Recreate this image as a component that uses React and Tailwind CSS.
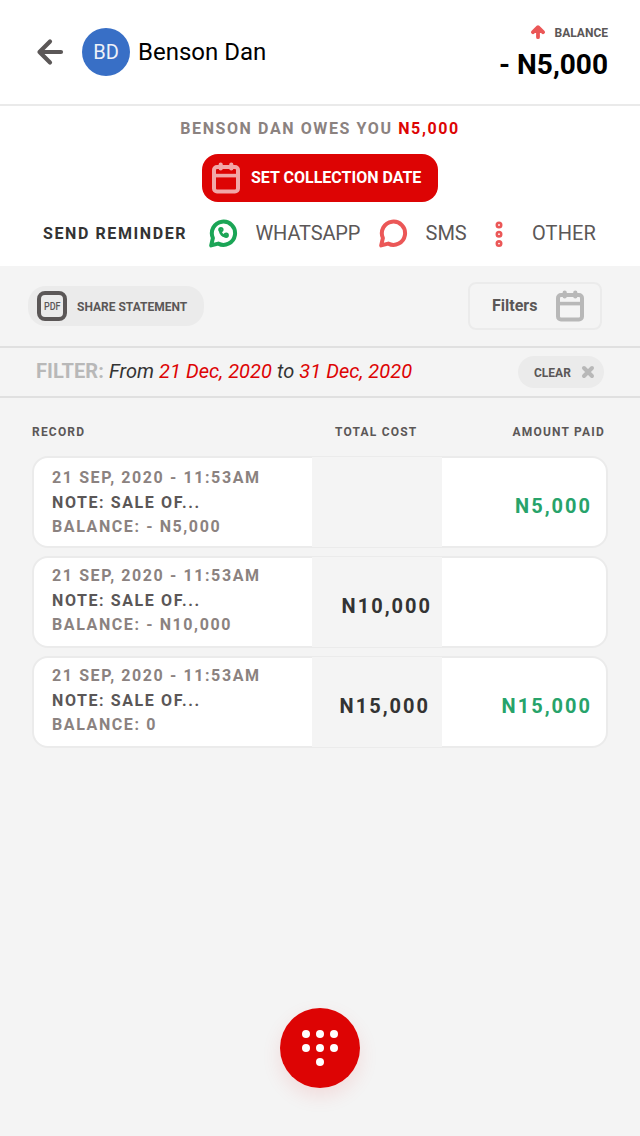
function CalendarIcon({ className }) {
  return (
    <svg className={className} width="28" height="32" viewBox="0 0 28 32" fill="none" stroke="currentColor">
      <rect x="2" y="5" width="24" height="24.5" rx="3" strokeWidth="4" />
      <path d="M4 13.6h20" strokeWidth="3.6" />
      <path d="M8.7 2.5v4M19.3 2.5v4" strokeWidth="4.2" strokeLinecap="round" />
    </svg>
  );
}

function BubbleIcon({ className, children }) {
  return (
    <svg className={className} width="30" height="30" viewBox="0 0 30 30" fill="none" stroke="currentColor">
      <path
        d="M4.9 19A11.6 11.6 0 1 1 10.3 24.6L3.2 26.4L4.9 19Z"
        strokeWidth="4"
        strokeLinejoin="round"
      />
      {children}
    </svg>
  );
}

const records = [
  { balance: "- N5,000", cost: "", paid: "N5,000", text: "pt-2", costPad: "" },
  { balance: "- N10,000", cost: "N10,000", paid: "", text: "pt-1.5", costPad: "pr-2.5" },
  { balance: "0", cost: "N15,000", paid: "N15,000", text: "pt-1.5", costPad: "pr-3" },
];

function RecordCard({ record }) {
  return (
    <div className="flex h-[92px] rounded-2xl border-2 border-[#ebebeb] bg-white font-bold">
      <div className={`w-[278px] pl-[18px] text-base leading-[24.6px] tracking-[1.6px] text-[#8b8280] ${record.text}`}>
        <p>21 SEP, 2020 - 11:53AM</p>
        <p className="text-[#5b5757]">NOTE: SALE OF...</p>
        <p>BALANCE: {record.balance}</p>
      </div>
      <div className={`-my-px flex w-[130px] items-center justify-end bg-[#f4f4f4] pt-2 text-xl tracking-[2px] text-[#333] ${record.costPad}`}>
        {record.cost}
      </div>
      <div className="flex flex-1 items-center justify-end pt-2 pr-3.5 text-xl tracking-[2px] text-[#27a36a]">
        {record.paid}
      </div>
    </div>
  );
}

export default function App() {
  return (
    <div className="flex h-[1136px] w-[640px] flex-col bg-[#f4f4f4] font-['Roboto',sans-serif]">
      <header className="flex h-[106px] items-start border-b-2 border-[#eaeaea] bg-white pr-8 pl-9">
        <svg className="mt-[37px] text-[#5b5757]" width="30" height="30" viewBox="0 0 30 30" fill="none" stroke="currentColor" strokeWidth="4.2" strokeLinecap="round" strokeLinejoin="round">
          <path d="M25 15H3.5M14 4.5L3.5 15L14 25.5" />
        </svg>
        <div className="mt-7 ml-4 flex size-12 items-center justify-center rounded-full bg-[#386fc6] text-xl text-[#eef1f8]">BD</div>
        <h1 className="mt-9 ml-2 text-2xl leading-8 text-black">Benson Dan</h1>
        <div className="ml-auto flex flex-col items-end pt-[25px]">
          <div className="flex h-4 items-center">
            <svg className="mr-[8.5px] text-[#eb5757]" width="16" height="16" viewBox="0 0 16 16" fill="none" stroke="currentColor" strokeWidth="3.8" strokeLinecap="round" strokeLinejoin="round">
              <path d="M8 12.2V2.5M3 7.2L8 2.2L13 7.2" />
              <path d="M8 3L12.5 7.5H3.5Z" strokeWidth="1" fill="currentColor" />
            </svg>
            <span className="text-xs font-bold text-[#5b5757]">BALANCE</span>
          </div>
          <p className="mt-2 text-[28px] leading-8 font-bold text-black">- N5,000</p>
        </div>
      </header>

      <section className="flex h-40 flex-col items-center bg-white">
        <p className="mt-[11px] text-base leading-6 font-bold tracking-[1.6px] text-[#8b8280]">
          BENSON DAN OWES YOU <span className="text-[#dd0404]">N5,000</span>
        </p>
        <button className="mt-[13px] flex h-12 w-[236px] items-center rounded-2xl bg-[#dd0404] pl-2.5 text-base font-bold text-white">
          <CalendarIcon className="text-[#f1a7a7]" />
          <span className="ml-[11px]">SET COLLECTION DATE</span>
        </button>
        <div className="mt-4 flex h-8 w-full items-center pl-[43px] text-xl text-[#5b5757]">
          <span className="w-[165px] text-base font-bold tracking-[1.6px] text-[#333]">SEND REMINDER</span>
          <BubbleIcon className="text-[#1ba556]">
            <path d="M12.4 10.7c-.5 3.8 2.6 6.7 6 6" strokeWidth="2.8" strokeLinecap="round" />
            <circle cx="12.9" cy="10.6" r="1.7" strokeWidth="2" />
            <circle cx="18.2" cy="16.2" r="1.7" strokeWidth="2" />
          </BubbleIcon>
          <span className="ml-[17.5px] w-[122.5px] pb-0.5 tracking-[-0.15px]">WHATSAPP</span>
          <BubbleIcon className="text-[#eb5757]" />
          <span className="ml-[17.5px] w-[69.5px] pb-0.5">SMS</span>
          <svg className="text-[#eb5757]" width="8" height="28" viewBox="0 0 8 28" fill="none" stroke="currentColor" strokeWidth="2.6">
            <circle cx="4" cy="5" r="2.2" />
            <circle cx="4" cy="14.2" r="2.2" />
            <circle cx="4" cy="23.6" r="2.2" />
          </svg>
          <span className="ml-[29px] pb-0.5 tracking-[0.1px]">OTHER</span>
        </div>
      </section>

      <div className="flex h-20 items-center justify-between pr-[38px] pl-7">
        <button className="flex h-10 w-44 items-center rounded-[18px] bg-[#ebebeb] pl-[9px] text-xs font-bold text-[#5b5757]">
          <span className="flex size-[30px] items-center justify-center rounded-lg border-4 border-[#5b5757] text-[10px] font-medium">
            <span className="scale-x-90 scale-y-115">PDF</span>
          </span>
          <span className="ml-2.5 pt-px">SHARE STATEMENT</span>
        </button>
        <button className="flex h-12 w-[134px] items-center rounded-lg border-2 border-[#ebebeb] pl-[22px] text-base font-bold text-[#5b5757]">
          <span className="w-16 text-left">Filters</span>
          <CalendarIcon className="text-[#b8b8b8]" />
        </button>
      </div>

      <div className="flex h-[52px] items-center justify-between border-y-2 border-[#e0e0e0] pr-9 pl-9">
        <p className="pb-0.5 text-xl tracking-[0.06px] text-[#333] italic">
          <span className="font-bold text-[#b8b8b8] not-italic">FILTER:</span> From{" "}
          <span className="text-[#dd0404]">21 Dec, 2020</span> to <span className="text-[#dd0404]">31 Dec, 2020</span>
        </p>
        <button className="flex h-8 w-[86px] items-center rounded-2xl bg-[#ebebeb] pl-4 text-xs font-bold text-[#5b5757]">
          <span className="w-[47px] pt-px text-left">CLEAR</span>
          <svg className="text-[#b8b8b8]" width="14" height="14" viewBox="0 0 14 14" stroke="currentColor" strokeWidth="4" strokeLinecap="round">
            <path d="M3 3L11 11M11 3L3 11" />
          </svg>
        </button>
      </div>

      <main className="flex flex-1 flex-col px-8">
        <div className="flex h-[58px] items-center pt-2.5 text-xs font-bold tracking-[1.2px] text-[#5b5757]">
          <span className="w-[303px]">RECORD</span>
          <span>TOTAL COST</span>
          <span className="ml-auto pr-[3px]">AMOUNT PAID</span>
        </div>
        <div className="flex flex-col gap-2">
          {records.map((record) => (
            <RecordCard key={record.balance} record={record} />
          ))}
        </div>
        <button className="mx-auto mt-auto mb-12 flex size-20 justify-center rounded-full bg-[#dd0404] pt-5 shadow-[0_8px_20px_rgba(221,4,4,0.1)]">
          <svg width="40" height="40" viewBox="0 0 40 40" fill="white">
            <circle cx="6" cy="6" r="4" />
            <circle cx="20" cy="6" r="4" />
            <circle cx="34" cy="6" r="4" />
            <circle cx="6" cy="20" r="4" />
            <circle cx="20" cy="20" r="4" />
            <circle cx="34" cy="20" r="4" />
            <circle cx="20" cy="34" r="4" />
          </svg>
        </button>
      </main>
    </div>
  );
}
